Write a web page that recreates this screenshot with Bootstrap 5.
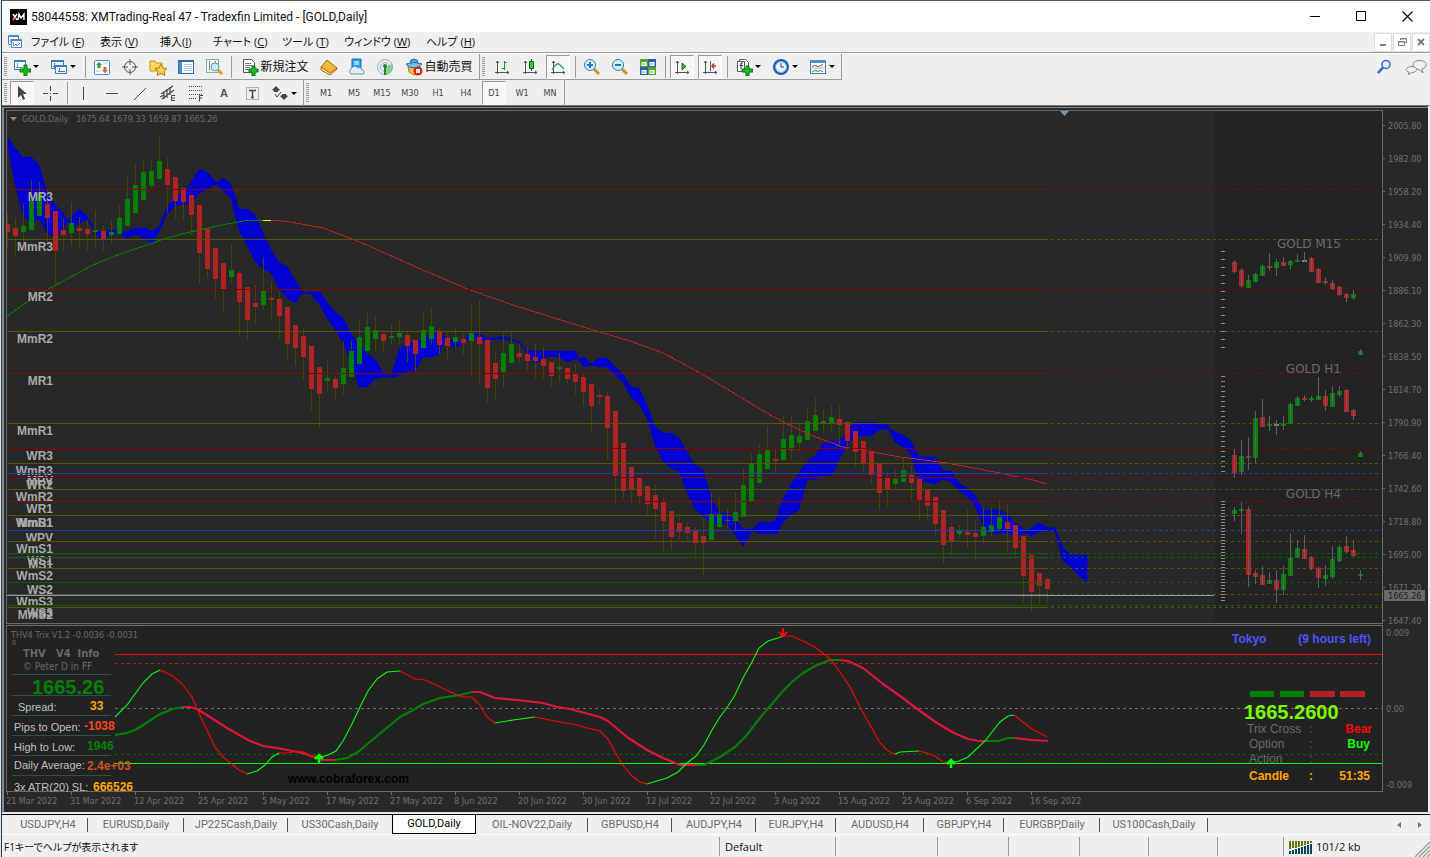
<!DOCTYPE html>
<html lang="ja">
<head>
<meta charset="utf-8">
<meta name="viewport" content="width=device-width, initial-scale=1">
<title>58044558: XMTrading-Real 47 - Tradexfin Limited - [GOLD,Daily]</title>
<link href="https://cdn.jsdelivr.net/npm/bootstrap@5.3.0/dist/css/bootstrap.min.css" rel="stylesheet">
<style>
  :root { --face:#efefef; --edge:#9a9a9a; --ui:"Open Sans","Noto Sans CJK JP",sans-serif; --tahoma:"DejaVu Sans Condensed","DejaVu Sans",sans-serif; }
  body { font-family:var(--ui); font-size:11px; line-height:16px; color:#111; background:var(--face); border-left:1px solid #dfe5ea; }
  .app-frame { border-left:1px solid #1e3f5c; }
  .btn { --bs-btn-padding-x:0; --bs-btn-padding-y:0; --bs-btn-border-width:0; --bs-btn-border-radius:0; font-size:11px; line-height:16px; display:inline-flex; align-items:center; justify-content:center; color:inherit; }
  .title-bar { height:32px; border-top:1px solid #555; font-size:11px; }
  .title-bar h1 { font-family:Roboto,sans-serif; font-size:12px; line-height:16px; font-weight:400; }
  .win-btn { width:46px; height:30px; }
  .menu-bar { height:21px; border-bottom:1px solid var(--edge); font-feature-settings:"palt"; }
  .menu-list { display:grid; grid-template-columns:69px 60px 53px 69px 62px 82px 68px; }
  .menu-bar a { color:#111; text-decoration:none; white-space:nowrap; }
  .menu-bar u { text-underline-offset:1px; }
  .mdi-btn { width:18px; height:19px; background:#fff; border:1px solid #dcdcdc; }
  .tool-area { border-top:1px solid #fff; border-bottom:1px solid #777; }
  .tool-row { height:26px; }
  .tool-set { border-right:1px solid var(--edge); height:26px; }
  .tool-set.lined { border-bottom:1px solid var(--edge); }
  .grip { width:3px; height:20px; margin:0 1px 0 2px; background:repeating-linear-gradient(#9a9a9a 0 1px,#efefef 1px 2px); }
  .grip.wide { margin:0 3px 0 2px; }
  .tool { width:28px; height:24px; }
  .tool-drop { width:37px; height:24px; padding-left:5px; justify-content:flex-start; gap:2px; }
  .tool-text { height:24px; width:80px; gap:1px; font-size:12px; white-space:nowrap; }
  .tool.on { width:24px; margin:0 2px; border-left:1px solid var(--edge); border-top:1px solid var(--edge); border-right:1px solid #fff; border-bottom:1px solid #fff; background:repeating-conic-gradient(#fff 0 25%,#efefef 0 50%) 0 0/2px 2px; }
  .caret-mark { border:3px solid transparent; border-top-color:#000; border-bottom:0; }
  .rule { width:1px; height:22px; background:var(--edge); margin:0 3px; }
  .rule.r2 { margin:0 2px 0 3px; }
  .period { font-family:var(--tahoma); font-size:9px; color:#444; }
  .sheet-bar { height:22px; border-top:1px solid #ddd; }
  .sheet-inner { border-top:1px solid #000; margin-top:1px; height:20px; font-size:11px; }
  .sheets { display:grid; grid-template-columns:80px 96px 104px 104px 84px 112px 84px 84px 80px 88px 80px 96px 108px; margin-left:6px; }
  .sheets .btn { height:19px; color:#6d6d6d; position:relative; font-family:Roboto,sans-serif; font-size:11px; }
  .sheets .btn::after { content:""; position:absolute; right:0; top:3px; bottom:2px; width:1px; background:#555; }
  .sheets .btn.active { background:#fff; color:#000; border:1px solid #000; border-top:0; }
  .sheets .btn.active::after, .sheets .pre::after { display:none; }
  .status-bar { height:23px; border-top:1px solid #fff; font-feature-settings:"palt"; }
  .help-text { font-size:10px; padding:2px 0 0 2px; }
  .cell { border-left:1px solid var(--edge); height:19px; padding-top:2px; }
  .c-lg { width:116px; padding-left:5px; } .c-md { width:102px; } .c-sm { width:71px; } .c-xs { width:69px; }
  .c-last { width:66px; }
  .c-end { width:147px; padding-left:5px; }
  svg { display:block; flex:none; }
  .chart text { font-family:var(--tahoma); font-size:9px; fill:#696969; white-space:pre; }
  .chart .arial { font-family:"Liberation Sans",sans-serif; font-size:12px; }
  .chart .b { font-weight:700; }
  .chart .lvl { fill:#a9a9a9; font-weight:700; text-anchor:end; }
  .chart .verd { font-family:"DejaVu Sans",sans-serif; font-size:12px; text-anchor:end; }
  .chart .lab { font-size:11px; fill:#c0c0c0; }
  .chart .big { font-size:20px; font-weight:700; }
  .chart .axis text { fill:#6e6e6e; }
</style>
</head>
<body>
<div class="app-frame d-flex flex-column min-vh-100">

<header class="title-bar bg-white d-flex align-items-center">
  <svg class="ms-2" width="17" height="16"><rect width="17" height="16"/><path d="M3 5l4 6M7 5l-4 6M8 11l1-6 2 4 3-4v6" stroke="#fff" stroke-width="1.4" fill="none"/><path d="M2 11l4-2" stroke="#e01010"/></svg>
  <h1 class="m-0 ms-1 flex-grow-1">58044558: XMTrading-Real 47 - Tradexfin Limited - [GOLD,Daily]</h1>
  <button class="btn win-btn" aria-label="Minimize"><svg width="11" height="11"><path d="M0 5.5h10" stroke="#000"/></svg></button>
  <button class="btn win-btn" aria-label="Maximize"><svg width="11" height="11"><path d="M.5.5h9v9h-9z" fill="none" stroke="#000"/></svg></button>
  <button class="btn win-btn" aria-label="Close"><svg width="11" height="11"><path d="M.5.5l10 10M10.500.5l-10 10" stroke="#000" stroke-width="1.100"/></svg></button>
</header>

<nav class="menu-bar d-flex align-items-center">
  <svg class="mx-1" width="17" height="16"><g fill="#fff" stroke="#4a86c8"><path d="M2.500 1.500h10v9h-10z"/><path d="M2.500 2.500h10M5 5v4M4 6h2M8 5v3"/><path d="M5.500 5.500h10v8h-10z"/><path d="M5.500 6.500h10M7 8l1 4 2-2 1 2 3-3" fill="none"/></g></svg>
  <div class="menu-list me-auto ms-1">
    <a href="#">ファイル (<u>F</u>)</a><a href="#">表示 (<u>V</u>)</a><a href="#">挿入(<u>I</u>)</a><a href="#">チャート (<u>C</u>)</a><a href="#">ツール (<u>T</u>)</a><a href="#">ウィンドウ (<u>W</u>)</a><a href="#">ヘルプ (<u>H</u>)</a>
  </div>
  <div class="d-flex" style="gap:1px">
    <button class="btn mdi-btn" aria-label="Minimize chart"><svg width="10" height="10"><path d="M2 8h6" stroke="#708090" stroke-width="2"/></svg></button>
    <button class="btn mdi-btn" aria-label="Restore chart"><svg width="10" height="10"><path d="M3.500 3V1.500h6v4H8M3 2h7M1.500 4.500h6v4h-6zM1 5h7" fill="none" stroke="#708090"/></svg></button>
    <button class="btn mdi-btn" aria-label="Close chart"><svg width="10" height="10"><path d="M2 2l6 6M8 2l-6 6" stroke="#708090" stroke-width="2"/></svg></button>
  </div>
</nav>

<div class="tool-area">
 <div class="tool-row d-flex justify-content-between">
  <div class="d-flex">
  <div class="tool-set lined d-flex align-items-center">
    <span class="grip"></span>
    <button class="btn tool-drop" aria-label="New chart"><svg width="18" height="18"><path d="M1.500 2.500h11v9h-11z" fill="#fff" stroke="#3a7ab8"/><path d="M1 3h12" stroke="#3a7ab8" stroke-width="2"/><path d="M3 9.500h7M4.500 5v5" stroke="#5a9ad0"/><path d="M11 7h3v4h4v3h-4v4h-3v-4H7v-3h4z" fill="#10c020" stroke="#087010"/></svg><i class="caret-mark"></i></button>
    <button class="btn tool-drop" aria-label="Profiles"><svg width="18" height="18"><g fill="#eef6fd" stroke="#3a7ab8"><path d="M1.500 2.500h12v8h-12z"/><path d="M5.500 7.500h11v8h-11z"/><path d="M1 3h13M5 8h12" stroke-width="2"/><path d="M3 8.500h8M4.500 5v5M8 13.500h7M9.500 10v4"/></g></svg><i class="caret-mark"></i></button>
    <span class="rule r2"></span>
    <button class="btn tool" aria-label="Market watch"><svg width="18" height="18"><rect x="1.500" y="2.500" width="15" height="14" rx="1" fill="#f4faff" stroke="#4a90d0"/><path d="M6 4l3 3H7.500v3h-3V7H3z" fill="#30a030"/><path d="M12 15l-3-3h1.500V9h3v3H15z" fill="#e06030"/><path d="M10 5h5M3 13h4" stroke="#b9d4ea"/></svg></button>
    <button class="btn tool" aria-label="Data window"><svg width="18" height="18"><g fill="none" stroke="#555"><circle cx="9" cy="9" r="5.500"/><path d="M9 1v6M9 11v6M1 9h6M11 9h6"/></g></svg></button>
    <button class="btn tool" aria-label="Navigator"><svg width="18" height="18"><path d="M1 3h5l1 2h6v8H1z" fill="#ffd95a" stroke="#c89020"/><path d="M12 6l2 4 4 .5-3 3 1 4-4-2-4 2 1-4-3-3 4-.5z" fill="#ffd040" stroke="#b07818"/></svg></button>
    <button class="btn tool" aria-label="Terminal"><svg width="18" height="18"><rect x="1.500" y="2.500" width="15" height="13" fill="#fff" stroke="#2a6aa8"/><path d="M1 3h16" stroke="#2a6aa8" stroke-width="2"/><path d="M2 4h3v11H2z" fill="#4a90d0"/><path d="M7 6.500h8M7 8.500h8M7 10.500h8M7 12.500h8" stroke="#a9c9e4"/></svg></button>
    <button class="btn tool" aria-label="Strategy tester"><svg width="18" height="18"><rect x="1.500" y="1.500" width="12" height="13" fill="#f6f3e8" stroke="#8aa"/><path d="M4.500 3v9M7.500 5v6M10.500 3v5" stroke="#68a"/><circle cx="10" cy="9" r="4" fill="#cfe8f8" stroke="#5a9ac8"/><path d="M13 12l4 4" stroke="#d8a020" stroke-width="3"/></svg></button>
    <span class="rule"></span>
    <button class="btn tool-text"><svg width="18" height="18"><path d="M2.500 1.500h8l3 3v10h-11z" fill="#fff" stroke="#555"/><path d="M4 5.500h6M4 7.500h7M4 9.500h5M4 11.500h4" stroke="#777"/><path d="M11 8h3v3h3v3h-3v4h-3v-4H8v-3h3z" fill="#10c020" stroke="#087010"/></svg>新規注文</button>
    <button class="btn tool" aria-label="MetaEditor"><svg width="18" height="18"><path d="M7 2l10 8-6 6L1 9z" fill="#f0b840" stroke="#a86c10"/><path d="M1 9v3l9 5 7-6v-1l-7 5z" fill="#ffe8a0" stroke="#a86c10"/></svg></button>
    <button class="btn tool" aria-label="Community"><svg width="18" height="18"><path d="M4 1h9v10H4z" fill="#2aa4e8" stroke="#0a70b8"/><path d="M6 4h5M6 6h5" stroke="#fff"/><path d="M3 16a3 3 0 010-5 4 4 0 017-1 3 3 0 014 2 2 2 0 01.500 4z" fill="#e4eefa" stroke="#6a90c0"/></svg></button>
    <button class="btn tool" aria-label="Signals"><svg width="18" height="18"><g fill="none" stroke="#86b0d8"><circle cx="9" cy="9" r="7.500"/><circle cx="9" cy="9" r="4.500"/></g><path d="M9 9v8a8 8 0 006-3A8 8 0 0016 6z" fill="#5cc060" opacity=".6"/><circle cx="9" cy="8" r="2" fill="#208830"/><path d="M9 8v9" stroke="#208830" stroke-width="2"/></svg></button>
    <button class="btn tool-text"><svg width="18" height="18"><path d="M3 8l1 6 5 3 6-3V8z" fill="#f0c040" stroke="#b08018"/><path d="M5 5q0-4 4-4t4 4z" fill="#50a8e0" stroke="#2070b0"/><path d="M1 6q8-3 16 0-3 4-8 4T1 6z" fill="#78c0f0" stroke="#2070b0"/><circle cx="13" cy="13" r="4.500" fill="#e02010"/><path d="M11 11h4v4h-4z" fill="#fff"/></svg>自動売買</button>
  </div>
  <div class="tool-set lined d-flex align-items-center">
    <span class="grip wide"></span>
    <button class="btn tool" aria-label="Bar chart"><svg width="18" height="18"><g fill="none" stroke="#555"><path d="M4.500 3v13M2 14.500h14M3 5l1.500-2L6 5M14 13l2 1.500-2 1.500"/></g><path d="M11.500 3v9M9 10.500h3M11 4.500h3" stroke="#209020"/></svg></button>
    <button class="btn tool" aria-label="Candlesticks"><svg width="18" height="18"><g fill="none" stroke="#555"><path d="M4.500 3v13M2 14.500h14M3 5l1.500-2L6 5M14 13l2 1.500-2 1.500"/></g><path d="M10.500 1v12" stroke="#087010"/><path d="M8.500 3.500h4v7h-4z" fill="#30d040" stroke="#087010"/></svg></button>
    <button class="btn tool on" aria-label="Line chart"><svg width="18" height="18"><g fill="none" stroke="#555"><path d="M4.500 3v13M2 14.500h14M3 5l1.500-2L6 5M14 13l2 1.500-2 1.500"/></g><path d="M3 12q5-9 8-5l4 4" stroke="#30a040" fill="none" stroke-width="1.300"/></svg></button>
    <span class="rule r2"></span>
    <button class="btn tool" aria-label="Zoom in"><svg width="18" height="18"><path d="M11 11l5 5" stroke="#c89820" stroke-width="3"/><circle cx="7" cy="7" r="5.500" fill="#d8f0fc" stroke="#2a80c0"/><path d="M4 7h6M7 4v6" stroke="#2878b8" stroke-width="2"/></svg></button>
    <button class="btn tool" aria-label="Zoom out"><svg width="18" height="18"><path d="M11 11l5 5" stroke="#c89820" stroke-width="3"/><circle cx="7" cy="7" r="5.500" fill="#d8f0fc" stroke="#2a80c0"/><path d="M4 7h6" stroke="#2878b8" stroke-width="2"/></svg></button>
    <button class="btn tool" aria-label="Tile windows"><svg width="18" height="18"><path d="M1 1h8v8H1zM9 9h8v8H9z" fill="#58a818"/><path d="M9 1h8v8H9zM1 9h8v8H1z" fill="#2860b0"/><path d="M2.500 4h5v4h-5zM10.500 4h5v4h-5zM2.500 12h5v4h-5zM10.500 12h5v4h-5z" fill="#fff"/><path d="M3 6h3M11 6h3M3 14h3M11 14h3" stroke="#88a"/></svg></button>
    <span class="rule r2"></span>
    <button class="btn tool on" aria-label="Auto scroll"><svg width="18" height="18"><g fill="none" stroke="#555"><path d="M4.500 3v13M2 14.500h14M3 5l1.500-2L6 5M14 13l2 1.500-2 1.500"/></g><path d="M9 5l4 3.500L9 12z" fill="#30b040" stroke="#107020"/></svg></button>
    <button class="btn tool on" aria-label="Chart shift"><svg width="18" height="18"><g fill="none" stroke="#555"><path d="M4.500 3v13M2 14.500h14M3 5l1.500-2L6 5M14 13l2 1.500-2 1.500"/></g><path d="M9.500 3v10" stroke="#2868b0"/><path d="M15 8h-4M13 5.500L11 8l2 2.500" stroke="#c04010" fill="none" stroke-width="1.500"/></svg></button>
    <span class="rule r2"></span>
    <button class="btn tool-drop" aria-label="Indicators"><svg width="18" height="18"><path d="M4.500 1.500h6l3 3v8h-9z" fill="#fff" stroke="#555"/><path d="M2.500 3.500h7v10h-7z" fill="#fff" stroke="#555"/><path d="M8 5H6v6M4.500 7.500H8" stroke="#333" fill="none"/><path d="M11 8h3v3h4v3h-4v4h-3v-4H7v-3h4z" fill="#10c020" stroke="#087010"/></svg><i class="caret-mark"></i></button>
    <button class="btn tool-drop" aria-label="Periods"><svg width="18" height="18"><circle cx="9" cy="9" r="8" fill="#1a60b8"/><circle cx="9" cy="9" r="5.500" fill="#e8f4fc" stroke="#70b0e8"/><path d="M9 5v4h3" stroke="#345" fill="none"/></svg><i class="caret-mark"></i></button>
    <button class="btn tool-drop" aria-label="Templates"><svg width="18" height="18"><rect x="1.500" y="2.500" width="15" height="13" fill="#fff" stroke="#3a7ab8"/><path d="M1 3.500h16" stroke="#4a90d0" stroke-width="3"/><path d="M3 8.500l3-1 3 1 5-2" stroke="#b04020" fill="none"/><path d="M1 10h16" stroke="#8ab8dc"/><path d="M3 14l3-1.500 3 1 2-1.500 3 2" stroke="#209030" fill="none"/></svg><i class="caret-mark"></i></button>
  </div>
  </div>
  <div class="d-flex align-items-center">
    <button class="btn tool" aria-label="Search"><svg width="16" height="16"><circle cx="10" cy="5.500" r="4" fill="#e8f2ff" stroke="#2a68d0" stroke-width="1.500"/><path d="M7 8.500L2 14" stroke="#2a68d0" stroke-width="2.500"/></svg></button>
    <button class="btn tool ms-1" aria-label="Chat"><svg width="22" height="18"><g fill="#f0f0f0" stroke="#888"><path d="M17 11l1 4-4-3.500c-8 0-8-9 0-9 9 0 9 7 3 8.500z"/><path d="M4 14l-.500 2.500L7 14.500c6 0 6-6 0-6-7 0-7 5-3 5.500z"/></g></svg></button>
  </div>
 </div>
 <div class="tool-row d-flex" style="height:25px">
  <div class="tool-set d-flex align-items-center">
    <span class="grip"></span>
    <button class="btn tool on" aria-label="Cursor"><svg width="18" height="18"><path d="M5 2v12l3-3 2 5 2-1-2-5h4z" fill="#444"/></svg></button>
    <button class="btn tool" aria-label="Crosshair"><svg width="18" height="18"><path d="M9.500 2v5M9.500 12v5M2 9.500h5M12 9.500h5M9 9.500h1" stroke="#444"/></svg></button>
    <span class="rule r2"></span>
    <button class="btn tool" aria-label="Vertical line"><svg width="18" height="18"><path d="M8.500 3v13" stroke="#444"/></svg></button>
    <button class="btn tool" aria-label="Horizontal line"><svg width="18" height="18"><path d="M3 9.500h12" stroke="#444"/></svg></button>
    <button class="btn tool" aria-label="Trend line"><svg width="18" height="18"><path d="M3 16L15 4" stroke="#444"/></svg></button>
    <button class="btn tool" aria-label="Channel"><svg width="18" height="18"><path d="M2 10L14 2M3 15L15 6M5 8v7M8 5v9M11 3v8M1 13l4-2" stroke="#444" fill="none" stroke-width="1.200"/><path d="M16 11.500h-3.500v5H16M12.500 14H16" stroke="#444" fill="none"/></svg></button>
    <button class="btn tool" aria-label="Fibonacci"><svg width="18" height="18"><path d="M2 2.500h13M2 6.500h13M2 10.500h13M2 14.500h8" stroke="#444" stroke-dasharray="1 1"/><path d="M16 11.500h-3.500v6M12.500 14H15" stroke="#444" fill="none"/></svg></button>
    <button class="btn tool fw-bold" style="font-family:'Liberation Sans',sans-serif;color:#555">A</button>
    <button class="btn tool" aria-label="Text label"><svg width="18" height="18"><rect x="3.500" y="3.500" width="12" height="12" fill="none" stroke="#777" stroke-dasharray="1 1"/><path d="M6 6.500h7M9.500 6v8M8 13.500h3" stroke="#444" stroke-width="1.400"/></svg></button>
    <button class="btn tool-drop" aria-label="Arrows"><svg width="18" height="18"><path d="M5 2l4 4-2 1v1H3V7L1 6zM13 16l-4-4 2-1v-1h4v1l2 1z" fill="#444"/><path d="M4 10l2 3 4-5" stroke="#444" fill="none"/></svg><i class="caret-mark"></i></button>
  </div>
  <div class="tool-set d-flex align-items-center">
    <span class="grip wide"></span>
    <button class="btn tool period">M1</button><button class="btn tool period">M5</button><button class="btn tool period">M15</button><button class="btn tool period">M30</button><button class="btn tool period">H1</button><button class="btn tool period">H4</button><button class="btn tool period on">D1</button><button class="btn tool period">W1</button><button class="btn tool period">MN</button>
  </div>
 </div>
</div>

<main>
<svg class="chart w-100 h-auto" viewBox="2 106 1428 706" role="img" aria-label="GOLD Daily chart">
  <rect x="2" y="106" width="1426" height="706" fill="#282828"/>
  <rect x="1215" y="111" width="167" height="512" fill="#232323"/>
  <rect x="7" y="626" width="1375" height="165" fill="#222"/>
  <g shape-rendering="crispEdges" fill="none" stroke="#696969">
    <path d="M2.500 812V106.500M3.500 812V107.500H1428" stroke="#8a8a8a"/>
    <path d="M6.500 623.500V110.500H1382.500V623.500ZM6.500 791.500V625.500H1382.500V791.500Z"/>
  </g>
  <g id="ribbon" fill="#0000d0" stroke="#0000d0" stroke-width=".6"></g>
  <g id="candles" shape-rendering="crispEdges"></g>
  <g fill="none" shape-rendering="crispEdges">
    <polyline stroke="#008000" points="7,316 27,302 50,288 67,279 93,265 120,254 150,244 167,238 190,232 217,226 243,221 263,220"/>
    <polyline stroke="#b22222" points="271,220 290,222 323,228 360,242 423,270 470,290 513,305 567,322 600,332 630,341 663,353 693,369 712,380 740,397 767,413 783,422 813,436 843,447 873,452 900,457 947,463 1000,473 1033,480 1047,484"/>
    <path d="M263 220.500h8" stroke="#ff0"/>
  </g>
  <g id="levels" shape-rendering="crispEdges"></g>
  <path d="M7 595.500H1214" stroke="#7f9fb4" shape-rendering="crispEdges"/>
  <path d="M1060 111h9l-4.500 5z" fill="#6f93b3"/>
  <path d="M10 117h7l-3.500 4z" fill="#8a8a8a"/>
  <text x="22" y="122">GOLD,Daily   1675.64 1679.33 1659.87 1665.26</text>
  <g id="minis" shape-rendering="crispEdges"></g>
  <text class="verd" x="1341" y="248">GOLD M15</text><text class="verd" x="1341" y="373">GOLD H1</text><text class="verd" x="1341" y="498">GOLD H4</text>

  <g shape-rendering="crispEdges" fill="none">
    <path d="M115 654.500H1382" stroke="red" /><path d="M115 763.500H1382" stroke="#0f0"/>
    <g stroke-dasharray="3 3"><path d="M115 663.500H1382" stroke="#a02828"/><path d="M115 708.500H1382" stroke="#696969"/><path d="M115 754.500H1382" stroke="#006400"/></g>
  </g>
  <text class="arial b" x="288" y="783" style="fill:#000">www.cobraforex.com</text>
  <g fill="none" stroke-width="2.200" stroke-linejoin="round">
    <g stroke="#008000">
      <polyline points="115,735 127,733 137,729 160,714 173,709 183,707"/>
      <polyline points="335,760 347,758 358,752 377,736 400,717 415,709 423,704 440,698 460,695 472,692"/>
      <polyline points="696,765 704,765 720,757 735,747 745,737 760,718 783,691 793,681 803,673 815,666 830,660 839,660"/>
      <polyline points="984,741 998,741 1008,738 1015,738"/>
    </g>
    <g stroke="#dc143c">
      <polyline points="183,707 190,707 197,709 210,717 227,728 248,740 263,746 277,748 303,753 322,760 335,760"/>
      <polyline points="472,692 480,692 495,698 517,700 543,703 557,707 570,709 600,717 608,721 627,737 647,750 663,758 680,765 696,765"/>
      <polyline points="839,660 848,661 863,668 883,684 900,696 920,711 937,723 954,733 968,739 979,741 984,741"/>
      <polyline points="1015,738 1032,740 1048,741"/>
    </g>
  </g>
  <g fill="none" stroke-width="1.100">
    <g stroke="#0f0">
      <polyline points="115,717 127,705 143,683 152,674 160,670"/>
      <polyline points="247,774 257,771 265,765 272,757 279,753"/>
      <polyline points="318,758 328,755 336,751 343,741 352,724 360,707 368,691 377,679 387,672 400,671"/>
      <polyline points="495,723 513,720 535,717"/>
      <polyline points="647,784 657,781 667,778 678,772 687,763 696,756 704,745 712,730 720,717 728,706 735,695 743,678 752,662 759,648 768,641 778,638 783,636"/>
      <polyline points="895,754 900,752 919,751"/>
      <polyline points="951,763 959,761 968,757 985,741 1000,722 1008,716 1014,715"/>
    </g>
    <g stroke="red">
      <polyline points="160,670 173,676 183,685 192,697 198,711 207,730 215,747 223,757 232,764 239,770 247,774"/>
      <polyline points="279,753 287,753 297,751 303,752 317,758"/>
      <polyline points="400,671 415,679 425,680 440,687 455,694 463,697 472,697 480,705 487,717 495,723"/>
      <polyline points="535,717 560,722 577,725 587,728 600,731 608,739 615,752 622,764 632,776 640,782 647,784"/>
      <polyline points="783,636 792,636 805,642 815,647 830,659 840,672 850,687 860,707 870,725 880,743 888,751 895,754"/>
      <polyline points="919,751 927,753 935,756 943,762 951,763"/>
      <polyline points="1014,715 1023,722 1032,729 1047,737"/>
    </g>
  </g>
  <path d="M319 763v-8M315 759l4-4 4 4M951 768v-8M947 764l4-4 4 4" stroke="#0f0" stroke-width="2.500" fill="none"/>
  <path d="M783 628v8M779 632l4 4 4-4" stroke="red" stroke-width="2" fill="none"/>

  <path d="M12 674.500h99M12 695.500h99M12 715.500h99M12 735.500h99M12 755.500h99M12 775.500h99" stroke="#2f4f4f" shape-rendering="crispEdges"/>
  <text x="11" y="638">THV4 Trix V1.2 -0.0036 -0.0031</text>
  <text x="12" y="645" style="font-size:7px">0</text>
  <text class="b" x="23" y="657" style="font-size:11px">THV   V4  Info</text>
  <text x="23" y="670" style="font-size:10px">© Peter D in FF</text>
  <g>
    <text class="arial big" x="32" y="694" style="fill:#008000;font-size:20px">1665.26</text>
    <text class="arial lab" x="18" y="711" style="font-size:11px">Spread:</text><text class="arial b" x="90" y="710" style="fill:orange">33</text>
    <text class="arial lab" x="14" y="731" style="font-size:11px">Pips to Open:</text><text class="arial b" x="84" y="730" style="fill:#ff4520">-1038</text>
    <text class="arial lab" x="14" y="751" style="font-size:11px">High to Low:</text><text class="arial b" x="87" y="750" style="fill:#008000">1946</text>
    <text class="arial lab" x="14" y="769" style="font-size:11px">Daily Average:</text><text class="arial b" x="87" y="770" style="fill:#d0501e">2.4e+03</text>
    <text class="arial lab" x="14" y="791" style="font-size:11px">3x ATR(20) SL:</text><text class="arial b" x="93" y="791" style="fill:orange">666526</text>
    <text class="arial b" x="1232" y="643" style="fill:#5050ff">Tokyo</text><text class="arial b" x="1371" y="643" text-anchor="end" style="fill:#5050ff">(9 hours left)</text>
    <path d="M1250 691h24v6h-24zM1280 691h24v6h-24z" fill="#008000"/><path d="M1310 691h25v6h-25zM1340 691h25v6h-25z" fill="#b22222"/>
    <text class="arial big" x="1244" y="719" style="fill:#7cfc00;font-size:20px">1665.2600</text>
    <text class="arial" x="1247" y="733">Trix Cross</text><text class="arial" x="1309" y="733">:</text><text class="arial b" x="1372" y="733" text-anchor="end" style="fill:red">Bear</text>
    <text class="arial" x="1249" y="748">Option</text><text class="arial" x="1309" y="748">:</text><text class="arial b" x="1370" y="748" text-anchor="end" style="fill:#0f0">Buy</text>
    <text class="arial" x="1249" y="763">Action</text><text class="arial" x="1309" y="763">:</text>
    <text class="arial b" x="1249" y="780" style="fill:orange">Candle</text><text class="arial b" x="1309" y="780" style="fill:orange">:</text><text class="arial b" x="1370" y="780" text-anchor="end" style="fill:orange">51:35</text>
  </g>
  <rect x="7" y="792" width="134" height="3" fill="#282828"/>
  <g id="axis" class="axis" shape-rendering="crispEdges"></g>
</svg>
</main>

<nav class="sheet-bar">
 <div class="sheet-inner d-flex justify-content-between">
  <div class="sheets">
   <button class="btn">USDJPY,H4</button><button class="btn">EURUSD,Daily</button><button class="btn">JP225Cash,Daily</button><button class="btn pre">US30Cash,Daily</button><button class="btn active">GOLD,Daily</button><button class="btn">OIL-NOV22,Daily</button><button class="btn">GBPUSD,H4</button><button class="btn">AUDJPY,H4</button><button class="btn">EURJPY,H4</button><button class="btn">AUDUSD,H4</button><button class="btn">GBPJPY,H4</button><button class="btn">EURGBP,Daily</button><button class="btn">US100Cash,Daily</button>
  </div>
  <div class="d-flex align-items-center pe-1 gap-2">
   <button class="btn" aria-label="Scroll left"><svg width="12" height="8"><path d="M7 1v6L3 4z" fill="#777"/></svg></button>
   <button class="btn" aria-label="Scroll right"><svg width="12" height="8"><path d="M4 1v6l4-3z" fill="#777"/></svg></button>
  </div>
 </div>
</nav>

<footer class="status-bar d-flex align-items-center position-relative">
  <span class="help-text flex-grow-1">F1キーでヘルプが表示されます</span>
  <span class="cell c-lg">Default</span><span class="cell c-md"></span><span class="cell c-sm"></span><span class="cell c-sm"></span><span class="cell c-xs"></span><span class="cell c-xs"></span><span class="cell c-last"></span>
  <span class="cell c-end d-flex align-items-center gap-1"><svg width="23" height="13" shape-rendering="crispEdges"><path d="M1 0v8M4 0v7M7 0v7M10 0v6M13 0v5M16 0v4M19 0v3M22 0v2" stroke="#5a7808" stroke-width="2"/><path d="M1 10v3M4 9v4M7 8v5M10 7v6M13 6v7M16 5v8M19 4v9M22 3v10" stroke="#0a4060" stroke-width="2"/></svg>101/2 kb</span>
  <svg class="position-absolute bottom-0 end-0" width="15" height="15"><path d="M0 15L15 0M4 15L15 4M8 15l7-7M12 15l3-3" stroke="#999" stroke-width="1.300"/></svg>
</footer>
</div>

<script>
const NS = 'http://www.w3.org/2000/svg';
const add = (host, tag, attrs, text) => {
  const el = document.createElementNS(NS, tag);
  for (const k in attrs) el.setAttribute(k, attrs[k]);
  if (text !== undefined) el.textContent = text;
  host.appendChild(el);
};
const byId = id => document.getElementById(id);

// Cloud: each piece lists its upper edge, then its lower edge.
[
 ["8,138 15,148 23,157 31,157 39,165 47,193 55,205 63,213 68,221","8,147 15,183 23,216 31,222 39,219 47,233 55,238 63,229 68,220"],
 ["68,220 79,209 87,216 95,231","68,222 71,229 79,224 87,219 95,232"],
 ["95,231 103,232 111,230 119,231 127,232 135,228 145,228 152,231 159,227 167,207 175,198 183,192 191,183 199,169 207,172 217,183","95,233 103,242 111,233 119,233 127,239 135,234 143,238 152,243 159,232 167,214 175,206 183,204 191,204 199,193 207,189 217,184"],
 ["217,183 223,178 231,184 239,209 247,209 255,215 263,233 271,250 279,262 287,267 295,280 302,292 311,292 320,292 327,302 335,312 343,318 351,334 359,344 367,354 375,359 383,373 391,376","217,185 223,191 231,198 239,230 247,245 255,261 263,269 271,273 279,288 287,298 295,303 302,293 311,294 320,305 327,318 335,329 343,343 351,360 359,387 367,387 375,379 383,377 391,377"],
 ["391,376 399,350 407,343 415,343 423,338 431,334 439,332 445,337 455,341 463,341 471,333 479,334 487,338 495,338 503,336 511,339 520,342 527,351 575,351 581,362","391,378 399,375 407,371 415,371 423,357 431,357 439,355 445,340 455,348 463,343 471,338 479,339 488,341 495,339 503,339 511,340 520,343 527,353 535,364 543,358 551,356 559,357 567,362 575,359 581,360"],
 ["579,358 584,357 591,364 599,358 607,358 615,367 623,374 631,387 639,388 647,405 655,427 663,433 671,433 679,438 687,452 695,465 703,470 711,497 719,513 727,513 735,520 743,529 755,529","579,360 584,367 591,365 599,367 607,367 615,375 623,382 631,397 639,404 647,418 655,445 663,461 671,468 679,471 687,492 695,509 703,516 711,522 719,525 727,523 735,535 743,546 753,530"],
 ["753,530 759,522 767,523 775,521 783,499 791,484 799,473 807,462 815,456 823,444 831,441 839,441 847,433 855,422 873,422 882,424 888,425 889,429","755,531 759,534 777,534 783,522 791,515 799,510 807,480 815,479 823,476 832,475 839,460 847,445 855,436 871,436 879,430 887,429"],
 ["888,428 895,432 903,435 911,441 919,457 935,457 943,471 951,471 959,483 967,488 975,495 983,510 999,510 1007,514 1015,523 1027,531 1039,523 1047,527 1055,528 1063,548 1071,555 1087,555","889,430 895,442 903,447 911,455 919,480 927,482 935,484 943,479 951,482 959,491 967,496 975,505 983,527 991,533 1007,533 1015,536 1027,533 1031,536 1039,532 1047,530 1055,531 1063,561 1071,567 1079,576 1087,582"]
].forEach(([up, low]) => add(byId('ribbon'), 'polygon', {points: up + ' ' + low.split(' ').reverse().join(' ')}));

// Daily candles, 8 px apart: colour, body top, body bottom, wick top, wick bottom.
const daily = `r224,232,214,247 r228,236,218,257 g226,232,204,242 g201,230,180,230 g193,216,182,216 r204,218,190,243 r211,251,211,286 r230,235,218,250 g223,233,202,246 r228,231,217,247
r229,234,220,251 g230,232,210,247 r231,239,225,251 g232,235,219,244 g218,234,205,234 g199,226,175,226 g185,213,163,213 g172,200,159,200 g171,186,160,189 g161,179,135,179
r169,185,158,213 r177,201,177,218 r188,202,188,221 r195,215,195,236 r205,253,205,284 r229,269,229,278 r248,279,248,298 r263,289,263,311 g270,277,244,283 r273,302,271,335
r287,320,287,341 r303,307,285,325 g291,305,258,310 r298,300,282,319 r299,316,291,339 r307,344,307,361 r325,348,325,366 r336,357,328,381 r346,389,346,411 r367,394,367,428
g378,381,359,392 r379,388,375,400 g368,384,341,395 g351,377,341,377 g337,364,319,364 g327,351,313,351 g330,339,315,352 r334,341,334,353 g336,338,324,344 g333,337,321,344
r335,346,330,362 r340,354,340,371 g330,348,312,348 g326,339,307,345 r331,345,329,354 r338,346,332,359 g337,342,327,349 r339,343,333,355 g333,341,304,376 r337,344,300,384
r340,388,340,403 r363,379,351,400 g353,372,330,388 g344,363,330,363 r353,357,345,362 r354,361,349,371 r357,361,343,378 r359,366,346,379 r362,376,362,387 g367,369,353,382
r368,379,368,385 r374,382,364,394 r377,392,374,406 r384,406,384,432 r395,397,390,405 r396,428,392,460 r411,476,411,504 r443,491,443,498 r467,489,467,503 r478,496,478,505
r486,504,486,515 r495,509,484,539 r502,521,497,551 r511,537,511,550 r523,532,514,540 r527,533,522,541 r531,543,527,559 r536,543,519,575 g514,540,493,540 g514,527,497,528
r520,521,508,529 g512,521,492,532 g485,517,468,517 g464,501,453,501 g454,483,443,483 g450,469,426,469 r459,461,447,473 g439,460,416,460 g435,450,416,459 g436,443,424,451
g421,440,409,440 g415,431,398,431 g421,423,410,433 g417,423,406,431 r419,425,406,447 r422,441,422,450 r431,452,431,466 r441,463,441,472 r451,475,451,485 r464,493,464,510
r478,489,472,506 g479,484,470,489 g470,482,458,482 r475,483,466,501 r479,500,479,520 r490,506,490,519 r497,524,497,535 r510,545,510,564 r527,542,522,555 g531,534,525,538
r532,535,510,548 r533,537,520,560 g527,536,508,543 g525,532,507,537 g517,529,499,532 r522,529,503,552 r525,548,525,557 r536,576,536,603 r555,592,555,612 r573,586,573,604 r579,589,576,603`;
const paint = {g: '#008000', r: '#b22222', w: '#808080'};
const drawCandles = (host, list, x0, step, wick, over) => list.trim().split(/\s+/).forEach((c, i) => {
  const [a, b, hi, lo] = c.slice(1).split(',').map(Number), x = x0 + step * i;
  const w = () => add(host, 'rect', {x, y: hi, width: 1, height: lo - hi, fill: wick});
  const left = Math.max(x - 2, 7);
  if (!over) w();
  add(host, 'rect', {x: left, y: a, width: x + 3 - left, height: Math.max(b - a, 1), fill: paint[c[0]]});
  if (over) w();
});
drawCandles(byId('candles'), daily, 7, 8, '#444400', false);

// Pivot levels: label, y, colour key.
const tone = {r: '#800000', o: '#555500', b: '#1c40b0', g: '#006400'};
[['MR3',189,'r'],['MmR3',239,'o'],['MR2',289,'r'],['MmR2',331,'o'],['MR1',373,'r'],['MmR1',423,'o'],['WR3',448,'r'],['WmR3',463,'o'],['MPV',473,'b'],['WR2',477,'r'],['WmR2',489,'o'],['WR1',501,'r'],['WmR1',515,'o'],['MmS1',515,'o'],['WPV',530,'b'],['WmS1',541,'o'],['WS1',553,'g'],['MS1',557,'g'],['WmS2',568,'o'],['WS2',582,'g'],['WmS3',594,'o'],['WS3',605,'g'],['MmS2',607,'o']]
.forEach(([name, y, c]) => {
  const g = byId('levels');
  add(g, 'text', {x: 53, y: y + 12, class: 'arial lvl'}, name);
  add(g, 'path', {d: `M8 ${y}.5H1048`, stroke: tone[c]});
  add(g, 'path', {d: `M1051 ${y}.5H1382`, stroke: tone[c], 'stroke-dasharray': '3 3'});
});

// Intraday thumbnails: tick ladder, then candles 7 px apart.
[
 [251,347,8,`r262,272,260,273 r270,286,268,288 g280,288,275,288 g274,282,273,282 g266,276,264,276 r266,268,253,271 g262,268,259,276 r262,266,257,266 g261,265,260,269 g260,262,254,262 w260,262,252,262 r258,272,257,272 r269,283,268,283 r281,283,277,285 r283,289,280,290 r287,295,286,296 r294,298,293,302 g294,298,290,300 g351,355,349,355`],
 [376,471,5,`r455,473,449,478 g456,472,440,475 r456,458,437,470 g418,458,411,463 r417,427,399,427 g424,426,416,431 w424,426,420,435 g424,426,416,430 g404,424,402,424 g398,406,396,406 r398,400,395,401 g398,400,396,402 g396,400,377,400 r396,406,390,411 g393,407,386,407 g391,395,386,397 r390,412,389,412 r410,416,409,420 g453,457,451,457`],
 [501,600,3,`g510,514,507,521 g509,511,502,534 r509,575,506,587 r573,577,570,584 r575,585,566,585 g580,584,572,584 r580,590,570,603 g574,590,566,595 g558,576,533,576 g548,558,540,558 r549,559,535,559 r557,569,556,570 r568,578,567,588 g575,579,565,586 g559,577,546,579 g547,561,545,562 r546,552,536,553 r550,556,540,557 g574,576,570,580`]
].forEach(([from, to, step, list]) => {
  const g = byId('minis');
  for (let y = from; y <= to; y += step) add(g, 'rect', {x: 1221, y, width: 4, height: 1, fill: '#8a8a8a'});
  drawCandles(g, list, 1234, 7, '#56616c', true);
});

// Price, indicator and date scales.
const axis = byId('axis');
['2005.80','1982.00','1958.20','1934.40','1909.90','1886.10','1862.30','1838.50','1814.70','1790.90','1766.40','1742.60','1718.80','1695.00','1671.20','1647.40'].forEach((t, i) => {
  add(axis, 'path', {d: `M1383 ${125 + 33 * i}.5h2`, stroke: '#696969'});
  add(axis, 'text', {x: 1388, y: 129 + 33 * i}, t);
});
add(axis, 'rect', {x: 1384, y: 590, width: 41, height: 11, fill: '#696969'});
add(axis, 'text', {x: 1388, y: 599, style: 'fill:#222'}, '1665.26');
[['0.009', 636, 1386], ['0.00', 712, 1386], ['-0.009', 788, 1386]].forEach(([t, y, x]) => add(axis, 'text', {x, y}, t));
['21 Mar 2022','31 Mar 2022','12 Apr 2022','25 Apr 2022','5 May 2022','17 May 2022','27 May 2022','8 Jun 2022','20 Jun 2022','30 Jun 2022','12 Jul 2022','22 Jul 2022','3 Aug 2022','15 Aug 2022','25 Aug 2022','6 Sep 2022','16 Sep 2022'].forEach((t, i) => {
  add(axis, 'path', {d: `M${7 + 64 * i}.5 792v3`, stroke: '#696969'});
  add(axis, 'text', {x: 6 + 64 * i, y: 804}, t);
});
</script>
<script src="https://cdn.jsdelivr.net/npm/bootstrap@5.3.0/dist/js/bootstrap.bundle.min.js"></script>
</body>
</html>
